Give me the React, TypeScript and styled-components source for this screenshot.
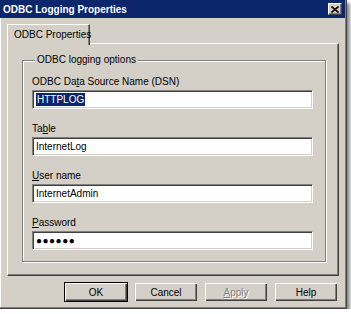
import React from "react";
import styled, { createGlobalStyle } from "styled-components";

const Global = createGlobalStyle`
  html, body {
    margin: 0;
    padding: 0;
    background: #ffffff;
  }
  body {
    font-family: "Liberation Sans", Arial, sans-serif;
    font-size: 10px;
    color: #000;
  }
`;

const Window = styled.div`
  width: 347px;
  height: 309px;
  box-sizing: border-box;
  background: #d4d0c8;
  border-right: 1px solid #404040;
  border-bottom: 1px solid #404040;
  box-shadow: inset -1px -1px 0 #808080, inset 1px 0 0 #ffffff,
    3px 3px 3px rgba(0, 0, 0, 0.45);
  display: flex;
  flex-direction: column;
`;

const TitleBar = styled.div`
  height: 18px;
  background: #0c266c;
  display: flex;
  align-items: center;
  justify-content: space-between;
  padding: 0 3px 0 3px;
  margin-right: 1px;
`;

const Title = styled.span`
  color: #fff;
  font-weight: bold;
  font-size: 10px;
`;

const CloseButton = styled.div`
  width: 14px;
  height: 12px;
  box-sizing: border-box;
  background: #d4d0c8;
  border-top: 1px solid #fff;
  border-left: 1px solid #fff;
  border-right: 1px solid #404040;
  border-bottom: 1px solid #404040;
  box-shadow: inset -1px -1px 0 #808080;
  display: flex;
  align-items: center;
  justify-content: center;
`;

const Body = styled.div`
  padding: 6px 7px 0 7px;
  display: flex;
  flex-direction: column;
`;

const TabStrip = styled.div`
  display: flex;
  position: relative;
  z-index: 1;
  margin-bottom: -2px;
`;

const Tab = styled.div`
  width: 83px;
  height: 21px;
  box-sizing: border-box;
  background: #d4d0c8;
  border-top: 1px solid #fff;
  border-left: 1px solid #fff;
  border-right: 1px solid #404040;
  box-shadow: inset -1px 0 0 #808080;
  padding: 4px 0 0 6px;
  white-space: nowrap;
`;

const Panel = styled.div`
  width: 332px;
  height: 233px;
  box-sizing: border-box;
  border-top: 1px solid #fff;
  border-left: 1px solid #fff;
  border-right: 1px solid #404040;
  border-bottom: 1px solid #404040;
  box-shadow: inset -1px -1px 0 #808080;
  padding: 10px 12px 0 14px;
`;

const Group = styled.fieldset`
  margin: 0;
  height: 208px;
  box-sizing: border-box;
  border: 1px solid #808080;
  box-shadow: 1px 1px 0 #fff, inset 1px 1px 0 #fff;
  padding: 10px 12px 0 9px;
  display: flex;
  flex-direction: column;
  gap: 14px;
`;

const Legend = styled.legend`
  padding: 0 2px;
  margin-left: 3px;
  background: #d4d0c8;
  line-height: 12px;
`;

const Field = styled.div`
  display: flex;
  flex-direction: column;
  gap: 2px;
`;

const Label = styled.span`
  line-height: 12px;
`;

const TextBox = styled.div<{ $dots?: boolean }>`
  height: 19px;
  box-sizing: border-box;
  background: #fff;
  border-top: 1px solid #808080;
  border-left: 1px solid #808080;
  border-right: 1px solid #fff;
  border-bottom: 1px solid #fff;
  box-shadow: inset 1px 1px 0 #404040, inset -1px -1px 0 #d4d0c8;
  padding: 0 0 0 3px;
  display: flex;
  align-items: center;
  font-size: ${(p) => (p.$dots ? "10px" : "10px")};
  letter-spacing: ${(p) => (p.$dots ? "0.5px" : "0")};
`;

const Selected = styled.span`
  background: #0c266c;
  color: #fff;
  padding: 1px 1px;
`;

const ButtonRow = styled.div`
  display: flex;
  justify-content: flex-end;
  gap: 6px;
  margin-top: 6px;
  padding-right: 1px;
`;

const Button = styled.div<{ $default?: boolean; $disabled?: boolean }>`
  width: 64px;
  height: 20px;
  box-sizing: border-box;
  background: #d4d0c8;
  border: 1px solid ${(p) => (p.$default ? "#000" : "#d4d0c8")};
  box-shadow: inset 1px 1px 0 #fff, inset -1px -1px 0 #404040,
    inset -2px -2px 0 #808080;
  display: flex;
  align-items: center;
  justify-content: center;
  color: ${(p) => (p.$disabled ? "#808080" : "#000")};
  text-shadow: ${(p) => (p.$disabled ? "1px 1px 0 #fff" : "none")};
`;

const U = styled.span`
  text-decoration: underline;
`;

export default function App() {
  return (
    <>
      <Global />
      <Window>
        <TitleBar>
          <Title>ODBC Logging Properties</Title>
          <CloseButton>
            <svg width="8" height="7" viewBox="0 0 8 7">
              <path d="M0.5 0.5 L7.5 6.5 M7.5 0.5 L0.5 6.5" stroke="#000" strokeWidth="1.6" />
            </svg>
          </CloseButton>
        </TitleBar>
        <Body>
          <TabStrip>
            <Tab>ODBC Properties</Tab>
          </TabStrip>
          <Panel>
            <Group>
              <Legend>ODBC logging options</Legend>
              <Field>
                <Label>
                  ODBC Da<U>t</U>a Source Name (DSN)
                </Label>
                <TextBox>
                  <Selected>HTTPLOG</Selected>
                </TextBox>
              </Field>
              <Field>
                <Label>
                  Ta<U>b</U>le
                </Label>
                <TextBox>InternetLog</TextBox>
              </Field>
              <Field>
                <Label>
                  <U>U</U>ser name
                </Label>
                <TextBox>InternetAdmin</TextBox>
              </Field>
              <Field>
                <Label>
                  <U>P</U>assword
                </Label>
                <TextBox $dots>●●●●●●</TextBox>
              </Field>
            </Group>
          </Panel>
          <ButtonRow>
            <Button $default>OK</Button>
            <Button>Cancel</Button>
            <Button $disabled>
              <U>A</U>pply
            </Button>
            <Button>Help</Button>
          </ButtonRow>
        </Body>
      </Window>
    </>
  );
}
